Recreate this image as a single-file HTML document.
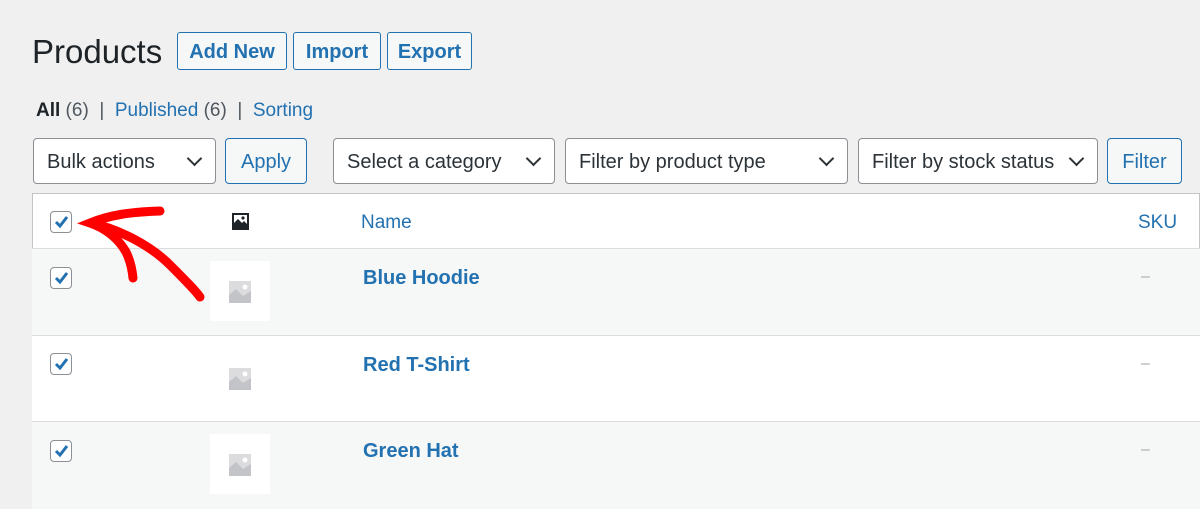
<!DOCTYPE html>
<html><head><style>
body{margin:0;width:1200px;height:508px;background:#f0f0f1;font-family:"Liberation Sans",sans-serif;position:relative;overflow:hidden;color:#1d2327}
.a{position:absolute}
.btn{position:absolute;top:32px;height:38px;border:1px solid #2271b1;border-radius:3px;background:#f6f7f7;color:#2271b1;font-size:20px;font-weight:bold;box-sizing:border-box;display:flex;align-items:center;justify-content:center;padding-top:3px}
.sel{position:absolute;top:138px;height:46px;border:1px solid #8c8f94;border-radius:4px;background:#fff;box-sizing:border-box;font-size:20px;color:#2c3338;padding-left:13px;padding-top:3px;display:flex;align-items:center}
.sel:after{content:"";position:absolute;right:15px;top:14px;width:9px;height:9px;border-right:2px solid #2c3338;border-bottom:2px solid #2c3338;transform:rotate(45deg)}
.ob{position:absolute;top:138px;height:46px;border:1px solid #2271b1;border-radius:4px;background:#f6f7f7;color:#2271b1;font-size:20px;box-sizing:border-box;display:flex;align-items:center;justify-content:center;padding-top:3px}
.cb{position:absolute;left:50px;width:22px;height:22px;border:1px solid #8c8f94;border-radius:4px;background:#fff;box-sizing:border-box}
.cb svg{position:absolute;left:2px;top:2px}
.row{position:absolute;left:32px;width:1168px;border-top:1px solid #dcdcde}
.th{position:absolute;left:210px;width:60px;height:60px;background:#fff}
.th svg{position:absolute;left:19px;top:20px}
.nm{position:absolute;left:363px;font-size:20px;font-weight:bold;color:#2271b1}
.dash{position:absolute;left:1141px;color:#a7aaad;font-size:16px}
</style></head><body>
<div class="a" style="left:32px;top:33px;font-size:33px;color:#1d2327">Products</div>
<div class="btn" style="left:177px;width:110px">Add New</div>
<div class="btn" style="left:293px;width:88px">Import</div>
<div class="btn" style="left:387px;width:85px">Export</div>
<div class="a" style="left:36px;top:100px;font-size:19px;color:#50575e"><b style="color:#1d2327">All</b> (6) &nbsp;| &nbsp;<span style="color:#2271b1">Published</span> (6) &nbsp;| &nbsp;<span style="color:#2271b1">Sorting</span></div>
<div class="sel" style="left:33px;width:183px">Bulk actions</div>
<div class="ob" style="left:225px;width:82px">Apply</div>
<div class="sel" style="left:333px;width:222px">Select a category</div>
<div class="sel" style="left:565px;width:283px">Filter by product type</div>
<div class="sel" style="left:858px;width:240px">Filter by stock status</div>
<div class="ob" style="left:1107px;width:75px">Filter</div>
<div class="a" style="left:32px;top:193px;width:1168px;height:315px;background:#fff;border:1px solid #c3c4c7;box-sizing:border-box"></div>
<div class="row" style="top:248px;height:87px;background:#f6f7f7"></div>
<div class="row" style="top:335px;height:86px;background:#fff"></div>
<div class="row" style="top:421px;height:87px;background:#f6f7f7"></div>
<svg class="a" style="left:231px;top:212px" width="19" height="19"><rect x="1" y="1" width="17" height="17" fill="#1d2327"/><rect x="3" y="3" width="13" height="13" fill="#fff"/><path d="M3 16 L3 11 L7 7 L11 11 L13 9 L16 12 L16 16Z" fill="#1d2327"/><circle cx="12" cy="6" r="1.6" fill="#1d2327"/></svg>
<div class="a" style="left:361px;top:212px;font-size:19px;color:#2271b1">Name</div>
<div class="a" style="left:1138px;top:212px;font-size:19px;color:#2271b1">SKU</div>
<div class="cb" style="top:211px"><svg width="16" height="16"><path d="M3 8 L7 12 L14 3" stroke="#2271b1" stroke-width="3" fill="none"/></svg></div>
<div class="cb" style="top:267px"><svg width="16" height="16"><path d="M3 8 L7 12 L14 3" stroke="#2271b1" stroke-width="3" fill="none"/></svg></div>
<div class="cb" style="top:353px"><svg width="16" height="16"><path d="M3 8 L7 12 L14 3" stroke="#2271b1" stroke-width="3" fill="none"/></svg></div>
<div class="cb" style="top:440px"><svg width="16" height="16"><path d="M3 8 L7 12 L14 3" stroke="#2271b1" stroke-width="3" fill="none"/></svg></div>
<div class="th" style="top:261px"><svg width="22" height="22"><rect width="22" height="22" fill="#dcdcde"/><path d="M0 22 L0 14 L7 8 L14 15 L22 10 L22 22Z" fill="#c3c4c7"/><circle cx="16" cy="6" r="2.5" fill="#fff"/></svg></div>
<div class="th" style="top:348px"><svg width="22" height="22"><rect width="22" height="22" fill="#dcdcde"/><path d="M0 22 L0 14 L7 8 L14 15 L22 10 L22 22Z" fill="#c3c4c7"/><circle cx="16" cy="6" r="2.5" fill="#fff"/></svg></div>
<div class="th" style="top:434px"><svg width="22" height="22"><rect width="22" height="22" fill="#dcdcde"/><path d="M0 22 L0 14 L7 8 L14 15 L22 10 L22 22Z" fill="#c3c4c7"/><circle cx="16" cy="6" r="2.5" fill="#fff"/></svg></div>
<div class="nm" style="top:267px">Blue Hoodie</div>
<div class="nm" style="top:354px">Red T-Shirt</div>
<div class="nm" style="top:440px">Green Hat</div>
<div class="dash" style="top:268px">–</div>
<div class="dash" style="top:355px">–</div>
<div class="dash" style="top:441px">–</div>
<svg class="a" style="left:0;top:190px" width="300" height="140"><path d="M160 21 C130 22 110 25 90 33 C105 38 118 48 126 62 C130 70 132 78 133 88" stroke="#f00" stroke-width="9" fill="none" stroke-linecap="round"/><path d="M92 33 C120 40 150 55 170 75 C185 90 195 100 200 107" stroke="#f00" stroke-width="9" fill="none" stroke-linecap="round"/></svg>
</body></html>
